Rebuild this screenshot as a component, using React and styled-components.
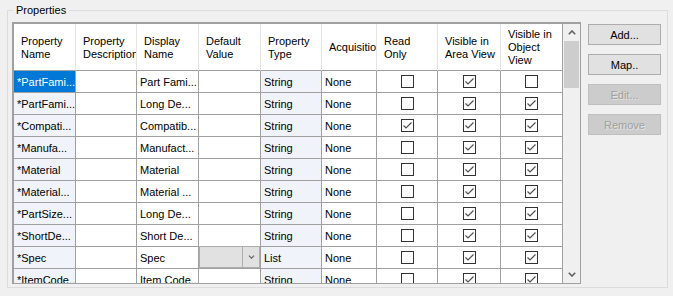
import React from 'react';
import styled, {createGlobalStyle, css} from 'styled-components';

const GlobalStyle = createGlobalStyle`
    body {
        margin: 0;
        background: #f0f0f0;
        font-family: "Liberation Sans", Arial, sans-serif;
        font-size: 11px;
        color: #000;
    }
`;

const GRID_LINE = '#a0a0a0';
const COLUMNS = [62, 61, 62, 62, 61, 55, 61, 63, 62];

const Styled = {
    Window: styled.div`
        width: 673px;
        height: 296px;
        overflow: hidden;
        padding-top: 3px;
        box-sizing: border-box;
    `,
    Group: styled.fieldset`
        margin: 0 0 0 7px;
        width: 661px;
        height: 285px;
        box-sizing: border-box;
        border: 1px solid #dcdcdc;
        padding: 5px 6px 3px 4px;
        min-width: 0;
    `,
    Legend: styled.legend`
        padding: 0 3px;
        margin-left: 1px;
        line-height: 14px;
        font-size: 11px;
    `,
    Body: styled.div`
        display: flex;
        gap: 7px;
        align-items: flex-start;
    `,
    Grid: styled.div`
        display: flex;
        width: 569px;
        height: 262px;
        box-sizing: border-box;
        border-style: solid;
        border-color: ${GRID_LINE};
        border-width: 2px 1px 1px 2px;
        background: #fff;
        overflow: hidden;
    `,
    Table: styled.div`
        display: grid;
        grid-template-columns: ${COLUMNS.map(w => w + 'px').join(' ')};
        grid-template-rows: 47px;
        grid-auto-rows: 22px;
        height: 259px;
        overflow: hidden;
        align-content: start;
    `,
    HeadCell: styled.div`
        display: flex;
        align-items: center;
        padding: 1px 0 0 7px;
        box-sizing: border-box;
        line-height: 13px;
        white-space: nowrap;
        overflow: hidden;
        border-right: 1px solid ${p => (p.$last ? GRID_LINE : '#e5e5e5')};
        border-bottom: 1px solid ${GRID_LINE};
    `,
    Cell: styled.div`
        display: flex;
        align-items: center;
        justify-content: ${p => (p.$center ? 'center' : 'flex-start')};
        padding-left: ${p => (p.$center ? 0 : 3)}px;
        box-sizing: border-box;
        white-space: nowrap;
        overflow: hidden;
        border-right: 1px solid ${GRID_LINE};
        border-bottom: 1px solid ${GRID_LINE};
        background: ${p => (p.$tint ? '#f0f4fa' : '#fff')};
        ${p => p.$selected && css`
            background: #0078d7;
            color: #fff;
        `}
    `,
    Combo: styled.div`
        display: flex;
        border-right: 1px solid ${GRID_LINE};
        border-bottom: 1px solid ${GRID_LINE};
        background: #e1e1e1;
        box-shadow: inset 0 0 0 1px #adadad;
        margin-top: -1px;
    `,
    ComboText: styled.div`
        flex: 1;
    `,
    ComboArrow: styled.div`
        width: 17px;
        display: flex;
        align-items: center;
        justify-content: center;
        border-left: 1px solid #adadad;
    `,
    Check: styled.span`
        width: 13px;
        height: 13px;
        box-sizing: border-box;
        border: 1px solid #333;
        background: #fff;
        display: flex;
        align-items: center;
        justify-content: center;
    `,
    Scroll: styled.div`
        width: 17px;
        display: flex;
        flex-direction: column;
        background: #f0f0f0;
    `,
    ScrollButton: styled.div`
        height: 17px;
        display: flex;
        align-items: center;
        justify-content: center;
    `,
    Track: styled.div`
        flex: 1;
        padding: 0 1px;
    `,
    Thumb: styled.div`
        height: 47px;
        background: #cdcdcd;
    `,
    Buttons: styled.div`
        display: flex;
        flex-direction: column;
        gap: 9px;
        padding-top: 2px;
    `,
    Button: styled.button`
        width: 73px;
        height: 21px;
        padding: 0;
        font-family: inherit;
        font-size: 11px;
        border: 1px solid ${p => (p.disabled ? '#bfbfbf' : '#adadad')};
        background: ${p => (p.disabled ? '#cccccc' : '#e1e1e1')};
        color: ${p => (p.disabled ? '#a0a0a0' : '#000')};
        text-shadow: ${p => (p.disabled ? '1px 1px 0 #e4e4e4' : 'none')};
    `
};

const headers = [
    ['Property', 'Name'],
    ['Property', 'Description'],
    ['Display', 'Name'],
    ['Default', 'Value'],
    ['Property', 'Type'],
    ['Acquisition'],
    ['Read', 'Only'],
    ['Visible in', 'Area View'],
    ['Visible in', 'Object', 'View']
];

const rows = [
    {name: '*PartFami...', display: 'Part Fami...', type: 'String', ro: false, area: true, obj: false, selected: true},
    {name: '*PartFami...', display: 'Long De...', type: 'String', ro: false, area: true, obj: true},
    {name: '*Compati...', display: 'Compatib...', type: 'String', ro: true, area: true, obj: true},
    {name: '*Manufa...', display: 'Manufact...', type: 'String', ro: false, area: true, obj: true},
    {name: '*Material', display: 'Material', type: 'String', ro: false, area: true, obj: true},
    {name: '*Material...', display: 'Material ...', type: 'String', ro: false, area: true, obj: true},
    {name: '*PartSize...', display: 'Long De...', type: 'String', ro: false, area: true, obj: true},
    {name: '*ShortDe...', display: 'Short De...', type: 'String', ro: false, area: true, obj: true},
    {name: '*Spec', display: 'Spec', type: 'List', ro: false, area: true, obj: true, combo: true},
    {name: '*ItemCode...', display: 'Item Code...', type: 'String', ro: false, area: true, obj: true}
];

const Chevron = ({down, color = '#606060', w = 8, h = 5}) => (
    <svg width={w} height={h} viewBox="0 0 8 5">
        <polyline
            points={down ? '0.8,0.8 4,4 7.2,0.8' : '0.8,4.2 4,1 7.2,4.2'}
            fill="none"
            stroke={color}
            strokeWidth="1.6" />
    </svg>
);

const CheckBox = ({checked}) => (
    <Styled.Check>
        {checked && (
            <svg width="11" height="11" viewBox="0 0 11 11">
                <polyline points="1.5,5.5 4,8 9.5,2.5" fill="none" stroke="#505050" strokeWidth="1.2" />
            </svg>
        )}
    </Styled.Check>
);

const Row = ({row}) => (
    <>
        <Styled.Cell $tint $selected={row.selected}>{row.name}</Styled.Cell>
        <Styled.Cell />
        <Styled.Cell>{row.display}</Styled.Cell>
        {row.combo ? (
            <Styled.Combo>
                <Styled.ComboText />
                <Styled.ComboArrow>
                    <Chevron down color="#6d6d6d" w={7} h={4} />
                </Styled.ComboArrow>
            </Styled.Combo>
        ) : (
            <Styled.Cell />
        )}
        <Styled.Cell $tint>{row.type}</Styled.Cell>
        <Styled.Cell>None</Styled.Cell>
        <Styled.Cell $center><CheckBox checked={row.ro} /></Styled.Cell>
        <Styled.Cell $center><CheckBox checked={row.area} /></Styled.Cell>
        <Styled.Cell $center><CheckBox checked={row.obj} /></Styled.Cell>
    </>
);

const App = () => (
    <Styled.Window>
        <GlobalStyle />
        <Styled.Group>
            <Styled.Legend>Properties</Styled.Legend>
            <Styled.Body>
                <Styled.Grid>
                    <Styled.Table>
                        {headers.map((lines, i) => (
                            <Styled.HeadCell key={i} $last={i === headers.length - 1}>
                                <div>
                                    {lines.map((l, j) => <div key={j}>{l}</div>)}
                                </div>
                            </Styled.HeadCell>
                        ))}
                        {rows.map((row, i) => <Row key={i} row={row} />)}
                    </Styled.Table>
                    <Styled.Scroll>
                        <Styled.ScrollButton><Chevron /></Styled.ScrollButton>
                        <Styled.Track><Styled.Thumb /></Styled.Track>
                        <Styled.ScrollButton><Chevron down /></Styled.ScrollButton>
                    </Styled.Scroll>
                </Styled.Grid>
                <Styled.Buttons>
                    <Styled.Button>Add...</Styled.Button>
                    <Styled.Button>Map..</Styled.Button>
                    <Styled.Button disabled>Edit...</Styled.Button>
                    <Styled.Button disabled>Remove</Styled.Button>
                </Styled.Buttons>
            </Styled.Body>
        </Styled.Group>
    </Styled.Window>
);

export default App;
